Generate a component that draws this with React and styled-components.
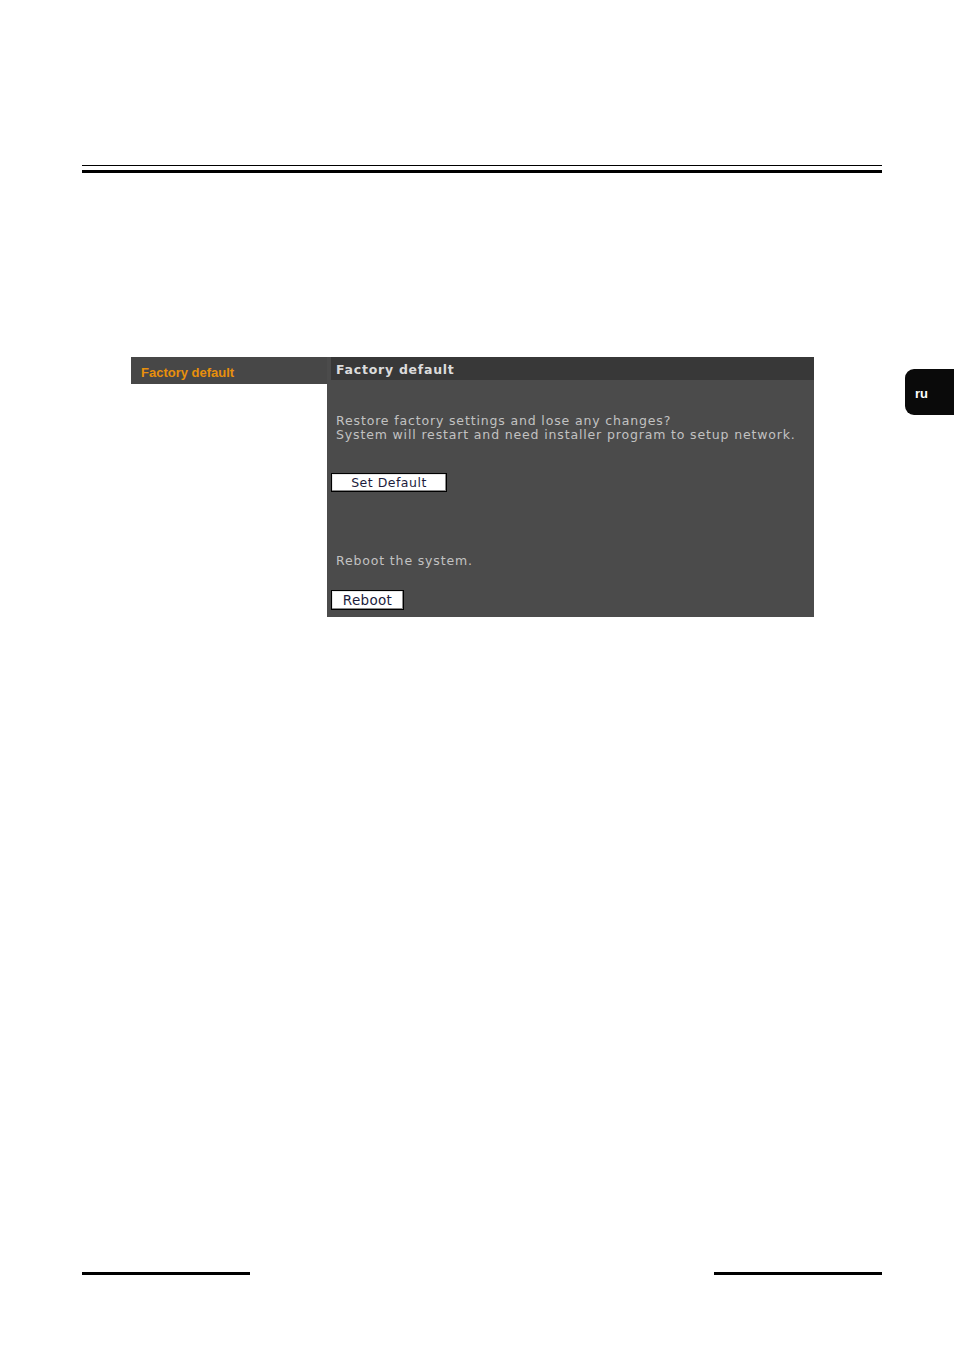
import React from 'react'
import styled, { createGlobalStyle } from 'styled-components'

const GlobalStyle = createGlobalStyle`
  html, body {
    margin: 0;
    padding: 0;
    background: #fff;
  }
  body {
    font-family: "DejaVu Sans", Verdana, sans-serif;
  }
`

const Page = styled.div`
  position: relative;
  width: 954px;
  height: 1350px;
  display: flex;
  flex-direction: column;
  overflow: hidden;
`

const TopRule = styled.div`
  margin: 165px 0 0 82px;
  width: 800px;
  height: 4px;
  border-top: 1px solid #000;
  border-bottom: 3px solid #000;
`

const Panel = styled.div`
  margin: 184px 0 0 131px;
  width: 683px;
  display: flex;
  align-items: flex-start;
`

const Sidebar = styled.div`
  width: 196px;
  flex: none;
`

const SideHeader = styled.div`
  height: 27px;
  box-sizing: border-box;
  background: #474747;
  padding: 3px 0 0 10px;
  display: flex;
  align-items: center;
  font-family: "Liberation Sans", Arial, sans-serif;
  font-weight: bold;
  font-size: 13px;
  color: #e8900c;
`

const Main = styled.div`
  flex: 1;
  background: #4b4b4b;
  padding-bottom: 7px;
`

const MainHeader = styled.div`
  margin-left: 4px;
  height: 23px;
  box-sizing: border-box;
  background: #383838;
  padding: 2px 0 0 5px;
  display: flex;
  align-items: center;
  font-weight: bold;
  font-size: 12.5px;
  letter-spacing: 0.75px;
  color: #dcdcdc;
`

const Note = styled.p`
  margin: ${p => p.$top}px 0 0 9px;
  font-size: 12.5px;
  line-height: 14px;
  letter-spacing: 0.85px;
  color: #c2c2c2;
`

const Button = styled.button`
  display: block;
  margin: ${p => p.$top}px 0 0 4px;
  width: ${p => p.$w}px;
  height: ${p => p.$h}px;
  padding: 0;
  background: #fff;
  border: 1px solid #000;
  box-shadow: inset -1px -1px 0 #8a8a8a, inset 1px 1px 0 #e8e8e8;
  font-family: "DejaVu Sans", Verdana, sans-serif;
  font-size: ${p => p.$fs}px;
  letter-spacing: ${p => p.$ls}px;
  color: #1c1c3c;
`

const BottomRow = styled.div`
  margin: auto 72px 75px 82px;
  display: flex;
  justify-content: space-between;
`

const BottomRule = styled.div`
  width: 168px;
  height: 3px;
  background: #000;
`

const LangTab = styled.div`
  position: absolute;
  top: 369px;
  right: 0;
  width: 49px;
  height: 46px;
  background: #0a0a0a;
  border-radius: 9px 0 0 9px;
  color: #fff;
  font-family: "Liberation Sans", Arial, sans-serif;
  font-size: 13px;
  font-weight: bold;
  display: flex;
  align-items: center;
  padding: 3px 0 0 10px;
  box-sizing: border-box;
`

export default function App() {
  return (
    <Page>
      <GlobalStyle />
      <TopRule />
      <Panel>
        <Sidebar>
          <SideHeader>Factory default</SideHeader>
        </Sidebar>
        <Main>
          <MainHeader>Factory default</MainHeader>
          <Note $top={34}>
            Restore factory settings and lose any changes?<br />
            System will restart and need installer program to setup network.
          </Note>
          <Button $top={31} $w={116} $h={19} $fs={12.5} $ls={0.5}>Set Default</Button>
          <Note $top={62}>Reboot the system.</Note>
          <Button $top={22} $w={73} $h={20} $fs={13.5} $ls={0.3}>Reboot</Button>
        </Main>
      </Panel>
      <BottomRow>
        <BottomRule />
        <BottomRule />
      </BottomRow>
      <LangTab>ru</LangTab>
    </Page>
  )
}
